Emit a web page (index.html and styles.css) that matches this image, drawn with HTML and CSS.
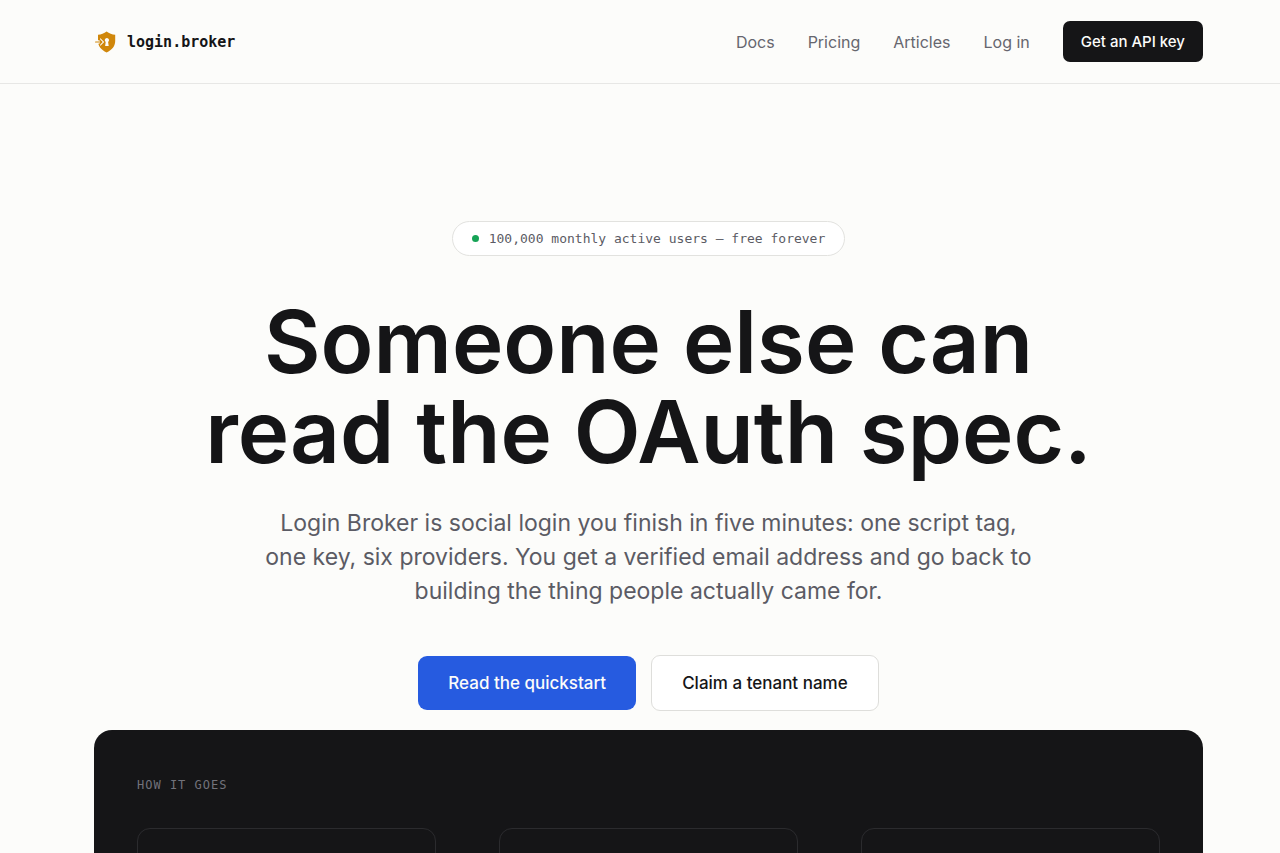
FILE: index.html
```html
<!DOCTYPE html>
<html lang="en">
<head>
<meta charset="utf-8">
<meta name="viewport" content="width=device-width, initial-scale=1">
<title>Login Broker</title>
<link rel="stylesheet" href="styles.css">
</head>
<body>
<header class="header">
  <div class="header-inner">
    <a class="brand" href="#">
      <svg class="brand-mark" viewBox="0 0 24 24" aria-hidden="true">
        <path fill="#d0870b" d="M12.600 1.500c2.600 2 5.400 3 8.600 3.200v6.300c0 5-3.100 8.900-8.600 11.400C7.200 19.900 4 16 4 11V4.700c3.200-.2 6-1.200 8.600-3.200z"/>
        <path fill="#fcfcfa" d="M3 10.300h3.200V8l4 4-4 4v-2.300H3z"/>
        <path fill="none" stroke="#d0870b" stroke-width="1.200" stroke-linecap="round" stroke-linejoin="round" d="M1.600 12h6M6 10.200 7.900 12 6 13.800"/>
        <path fill="#fcfcfa" d="M12.900 8a2.200 2.200 0 0 1 1.200 4l.6 4h-3.600l.6-4a2.200 2.200 0 0 1 1.200-4z"/>
      </svg>
      <span>login.broker</span>
    </a>
    <nav class="nav">
      <a class="nav-link" href="#">Docs</a>
      <a class="nav-link" href="#">Pricing</a>
      <a class="nav-link" href="#">Articles</a>
      <a class="nav-link" href="#">Log in</a>
      <a class="nav-cta" href="#">Get an API key</a>
    </nav>
  </div>
</header>
<main class="main">
  <section class="hero">
    <p class="pill"><span class="dot"></span>100,000 monthly active users — free forever</p>
    <h1 class="title">Someone else can<br>read the OAuth spec.</h1>
    <p class="lead">Login Broker is social login you finish in five minutes: one script tag, one key, six providers. You get a verified email address and go back to building the thing people actually came for.</p>
    <div class="actions">
      <a class="button primary" href="#">Read the quickstart</a>
      <a class="button secondary" href="#">Claim a tenant name</a>
    </div>
  </section>
  <section class="steps">
    <h2 class="steps-title">How it goes</h2>
    <div class="steps-grid">
      <div class="step"></div>
      <div class="step"></div>
      <div class="step"></div>
    </div>
  </section>
</main>
</body>
</html>
```

FILE: styles.css
```css
* {
  box-sizing: border-box;
}

body {
  margin: 0;
  background: #fcfcfa;
  color: #151517;
  font-family: Inter, "Liberation Sans", sans-serif;
  overflow-x: hidden;
}

a {
  color: inherit;
  text-decoration: none;
}

.header {
  border-bottom: 1px solid #e7e7e5;
}

.header-inner {
  display: flex;
  align-items: center;
  justify-content: space-between;
  padding: 21px 77px 21px 94px;
}

.brand {
  display: flex;
  align-items: center;
  gap: 9px;
  font: 600 15px/24px "DejaVu Sans Mono", monospace;
}

.brand-mark {
  width: 24px;
  height: 24px;
}

.nav {
  display: flex;
  align-items: center;
  gap: 33px;
  color: #66666e;
}

.nav-link {
  font-size: 16px;
}

.nav-cta {
  padding: 0 18px;
  border-radius: 7px;
  background: #151517;
  color: #fcfcfa;
  font-size: 15px;
  font-weight: 500;
  line-height: 41px;
}

.main {
  padding: 137px 77px 0 94px;
}

.hero {
  display: flex;
  flex-direction: column;
  align-items: center;
  text-align: center;
}

.pill {
  display: flex;
  align-items: center;
  gap: 10px;
  margin: 0 0 41px;
  padding: 0 19px;
  border: 1px solid #e2e2df;
  border-radius: 18px;
  background: #fff;
  color: #5b5b64;
  font: 13px/33px "DejaVu Sans Mono", monospace;
}

.dot {
  width: 7px;
  height: 7px;
  border-radius: 50%;
  background: #16a356;
}

.title {
  margin: 0 0 29px;
  font-size: 87px;
  font-weight: 600;
  line-height: 90px;
}

.lead {
  max-width: 770px;
  margin: 0 0 47px;
  color: #5b5b64;
  font-size: 23px;
  line-height: 34px;
}

.actions {
  display: flex;
  align-items: center;
  gap: 15px;
}

.button {
  padding: 0 30px;
  border-radius: 9px;
  font-size: 17px;
  font-weight: 500;
  line-height: 54px;
}

.primary {
  background: #265be0;
  color: #fcfcfa;
}

.secondary {
  border: 1px solid #dededb;
  background: #fff;
}

.steps {
  margin-top: 19px;
  padding: 46px 43px 43px;
  border-radius: 18px;
  background: #151517;
}

.steps-title {
  margin: 0 0 34px;
  color: #72727b;
  font: 12px/18px "DejaVu Sans Mono", monospace;
  letter-spacing: 1px;
  text-transform: uppercase;
}

.steps-grid {
  display: grid;
  grid-template-columns: repeat(3, 1fr);
  gap: 63px;
}

.step {
  min-height: 220px;
  border: 1px solid #2b2b2e;
  border-radius: 13px;
}
```
